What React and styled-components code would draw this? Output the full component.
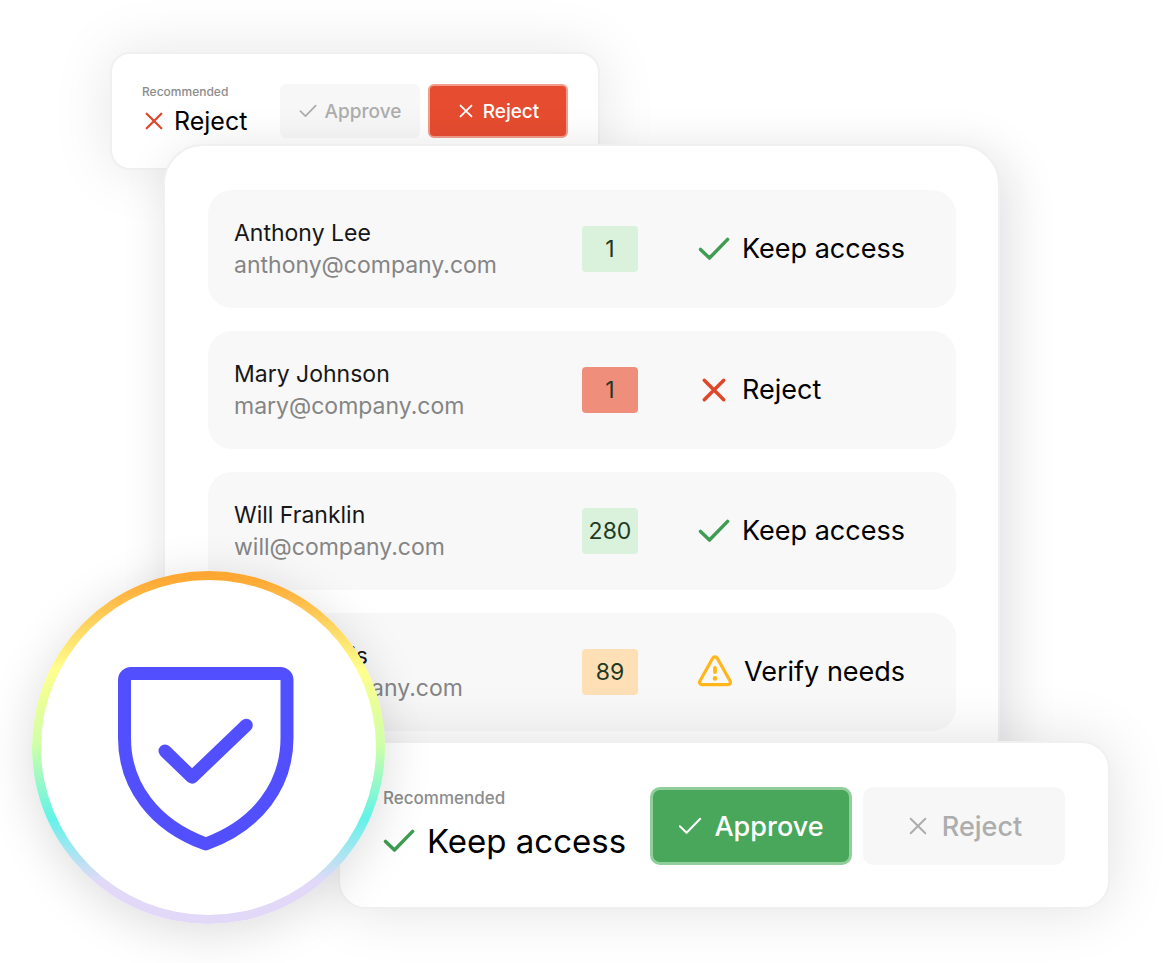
import React from 'react';
import styled, { createGlobalStyle } from 'styled-components';

const members = [
  { name: 'Anthony Lee', email: 'anthony@company.com', count: 1, tone: 'green', status: 'keep' },
  { name: 'Mary Johnson', email: 'mary@company.com', count: 1, tone: 'red', status: 'reject' },
  { name: 'Will Franklin', email: 'will@company.com', count: 280, tone: 'green', status: 'keep' },
  { name: 'Chris Morris', email: 'chris@company.com', count: 89, tone: 'amber', status: 'verify' },
];

const tones = {
  green: '#daf1dc',
  red: '#ee8e7b',
  amber: '#ffdfb5',
};

function CheckIcon({ size, color = 'currentColor', weight = 2 }) {
  return (
    <Icon width={size} height={size} viewBox="0 0 24 24" stroke={color} strokeWidth={weight} aria-hidden="true">
      <path d="M1.9 12.3 8.6 18.8 22.2 4.8" />
    </Icon>
  );
}

function CrossIcon({ size, color = 'currentColor', weight = 2 }) {
  return (
    <Icon width={size} height={size} viewBox="0 0 24 24" stroke={color} strokeWidth={weight} aria-hidden="true">
      <path d="M4.7 4.7 19.3 19.3M19.3 4.7 4.7 19.3" />
    </Icon>
  );
}

function WarningIcon() {
  return (
    <Icon width="34" height="34" viewBox="0 0 34 34" stroke="#ffb61a" strokeWidth="3.2" aria-hidden="true">
      <path d="M14.7 3.2a2.6 2.6 0 0 1 4.6 0l12.8 22.8a2.4 2.4 0 0 1-2.1 3.6H4a2.4 2.4 0 0 1-2.1-3.6z" />
      <path d="M17 13v4" strokeWidth="3.8" />
      <circle cx="17" cy="23.4" r="2.3" fill="#ffb61a" stroke="none" />
    </Icon>
  );
}

function Status({ type }) {
  if (type === 'keep') {
    return (
      <StatusLine>
        <CheckIcon size={32} color="#3f9c52" weight={2.6} />
        Keep access
      </StatusLine>
    );
  }
  if (type === 'reject') {
    return (
      <StatusLine>
        <CrossIcon size={32} color="#e0452a" weight={2.6} />
        Reject
      </StatusLine>
    );
  }
  return (
    <StatusLine>
      <WarningIcon />
      Verify needs
    </StatusLine>
  );
}

function App() {
  return (
    <>
      <GlobalStyle />
      <Stage>
        <SmallCard>
          <Recommendation>
            <Label>Recommended</Label>
            <Verdict>
              <CrossIcon size={24} color="#e0452a" weight={2.2} />
              Reject
            </Verdict>
          </Recommendation>
          <Actions>
            <ActionButton type="button">
              <CheckIcon size={18} weight={2.4} />
              Approve
            </ActionButton>
            <ActionButton type="button" $active="reject">
              <CrossIcon size={18} weight={2.4} />
              Reject
            </ActionButton>
          </Actions>
        </SmallCard>

        <Panel>
          <Table>
            <tbody>
              {members.map((member) => (
                <tr key={member.email}>
                  <PersonCell>
                    <Name>{member.name}</Name>
                    <Email>{member.email}</Email>
                  </PersonCell>
                  <CountCell>
                    <Count $tone={member.tone}>{member.count}</Count>
                  </CountCell>
                  <StatusCell>
                    <Status type={member.status} />
                  </StatusCell>
                </tr>
              ))}
            </tbody>
          </Table>
        </Panel>

        <LargeCard>
          <Recommendation $large>
            <Label $large>Recommended</Label>
            <Verdict $large>
              <CheckIcon size={32} color="#3f9c52" weight={2.6} />
              Keep access
            </Verdict>
          </Recommendation>
          <Actions $large>
            <ActionButton type="button" $large $active="approve">
              <CheckIcon size={24} />
              Approve
            </ActionButton>
            <ActionButton type="button" $large>
              <CrossIcon size={24} />
              Reject
            </ActionButton>
          </Actions>
        </LargeCard>

        <ShieldBadge>
          <Shield viewBox="0 0 335 335" aria-hidden="true">
            <g transform="translate(77 87)">
              <path d="M13 6.5H162.5a6.5 6.5 0 0 1 6.5 6.5V71C169 118 140 158 87.75 177 35.5 158 6.5 118 6.5 71V13a6.5 6.5 0 0 1 6.5-6.5z" />
              <path d="M47 84 74 110.2 128.3 58.3" />
            </g>
          </Shield>
        </ShieldBadge>
      </Stage>
    </>
  );
}

export default App;

const GlobalStyle = createGlobalStyle`
  *, *::before, *::after {
    box-sizing: border-box;
  }

  body {
    margin: 0;
    background: #fff;
    color: #000;
    font-family: Inter, "Liberation Sans", sans-serif;
  }
`;

const Icon = styled.svg`
  flex: none;
  fill: none;
  stroke-linecap: round;
  stroke-linejoin: round;
`;

const Stage = styled.main`
  position: relative;
  display: flex;
  flex-direction: column;
  padding: 52px 54px 54px 110px;
  overflow: hidden;
`;

const Card = styled.section`
  display: flex;
  align-items: center;
  justify-content: space-between;
  background: #fff;
  border: 2px solid #f0f0f0;
`;

const SmallCard = styled(Card)`
  align-self: flex-start;
  width: 490px;
  padding: 30px;
  border-radius: 20px;
  box-shadow: 0 0 60px rgba(0, 0, 0, 0.1);
`;

const Panel = styled.section`
  position: relative;
  margin: -26px 110px 0 53px;
  padding: 44px 42px 44px 43px;
  background: #fff;
  border: 2px solid #f0f0f0;
  border-radius: 40px;
  box-shadow: 8px 10px 50px rgba(20, 20, 40, 0.14);
`;

const LargeCard = styled(Card)`
  position: relative;
  margin: -36px 0 0 228px;
  padding: 44px 43px 42px;
  border-radius: 28px;
  box-shadow: 0 0 60px rgba(0, 0, 0, 0.12);
`;

const Recommendation = styled.div`
  display: flex;
  flex-direction: column;
  gap: ${({ $large }) => ($large ? '8px' : '4px')};
`;

const Label = styled.span`
  font-size: ${({ $large }) => ($large ? '17px' : '12px')};
  line-height: ${({ $large }) => ($large ? '22px' : '16px')};
  font-weight: 500;
  color: #8c8c8c;
`;

const Verdict = styled.strong`
  display: flex;
  align-items: center;
  gap: ${({ $large }) => ($large ? '12px' : '8px')};
  font-size: ${({ $large }) => ($large ? '33px' : '25px')};
  line-height: ${({ $large }) => ($large ? '48px' : '34px')};
  font-weight: 400;
  white-space: nowrap;
`;

const Actions = styled.div`
  display: flex;
  gap: ${({ $large }) => ($large ? '11px' : '8px')};
`;

const activeColors = {
  approve: { fill: '#48a75a', edge: '#90ce9b' },
  reject: { fill: '#e64c30', edge: '#f39c8a' },
};

const ActionButton = styled.button`
  display: flex;
  align-items: center;
  justify-content: center;
  gap: ${({ $large }) => ($large ? '12px' : '8px')};
  width: ${({ $large }) => ($large ? '202px' : '140px')};
  height: ${({ $large }) => ($large ? '78px' : '54px')};
  padding: 0;
  border-style: solid;
  border-width: ${({ $large }) => ($large ? '3px' : '2px')};
  border-color: ${({ $active }) => ($active ? activeColors[$active].edge : '#f7f7f7')};
  border-radius: ${({ $large }) => ($large ? '10px' : '6px')};
  background: ${({ $active }) => ($active ? activeColors[$active].fill : '#f7f7f7')};
  color: ${({ $active }) => ($active ? '#fff' : '#adadad')};
  font-family: inherit;
  font-size: ${({ $large }) => ($large ? '27px' : '19px')};
  font-weight: 500;
  cursor: pointer;
`;

const Table = styled.table`
  width: 100%;
  margin: -23px 0;
  border-collapse: separate;
  border-spacing: 0 23px;
  table-layout: fixed;

  td {
    height: 118px;
    padding: 0;
    background: #f8f8f8;
    vertical-align: middle;
  }
`;

const PersonCell = styled.td`
  width: 50%;
  border-radius: 24px 0 0 24px;

  && {
    padding-left: 26px;
  }
`;

const CountCell = styled.td`
  width: 116px;
`;

const StatusCell = styled.td`
  border-radius: 0 24px 24px 0;
`;

const Name = styled.div`
  font-size: 23px;
  line-height: 32px;
  color: #171717;
`;

const Email = styled.div`
  font-size: 23px;
  line-height: 32px;
  color: #858585;
`;

const Count = styled.div`
  width: 56px;
  border-radius: 4px;
  background: ${({ $tone }) => tones[$tone]};
  color: #1f3a24;
  font-size: 23px;
  line-height: 46px;
  text-align: center;
`;

const StatusLine = styled.div`
  display: flex;
  align-items: center;
  gap: 12px;
  font-size: 27px;
  line-height: 36px;
  white-space: nowrap;
`;

const ShieldBadge = styled.div`
  position: absolute;
  left: 32px;
  bottom: 39px;
  width: 353px;
  height: 353px;
  padding: 9px;
  border-radius: 50%;
  background: linear-gradient(#ffa733 2%, #ffff8c 28%, #cfffa8 49%, #62f3e8 70%, #e2d9f8 88%);
  box-shadow: 0 8px 50px rgba(0, 0, 0, 0.14);
`;

const Shield = styled.svg`
  display: block;
  width: 100%;
  height: 100%;
  border-radius: 50%;
  background: #fff;
  fill: none;
  stroke: #524fff;
  stroke-width: 13;
  stroke-linecap: round;
  stroke-linejoin: round;
`;
